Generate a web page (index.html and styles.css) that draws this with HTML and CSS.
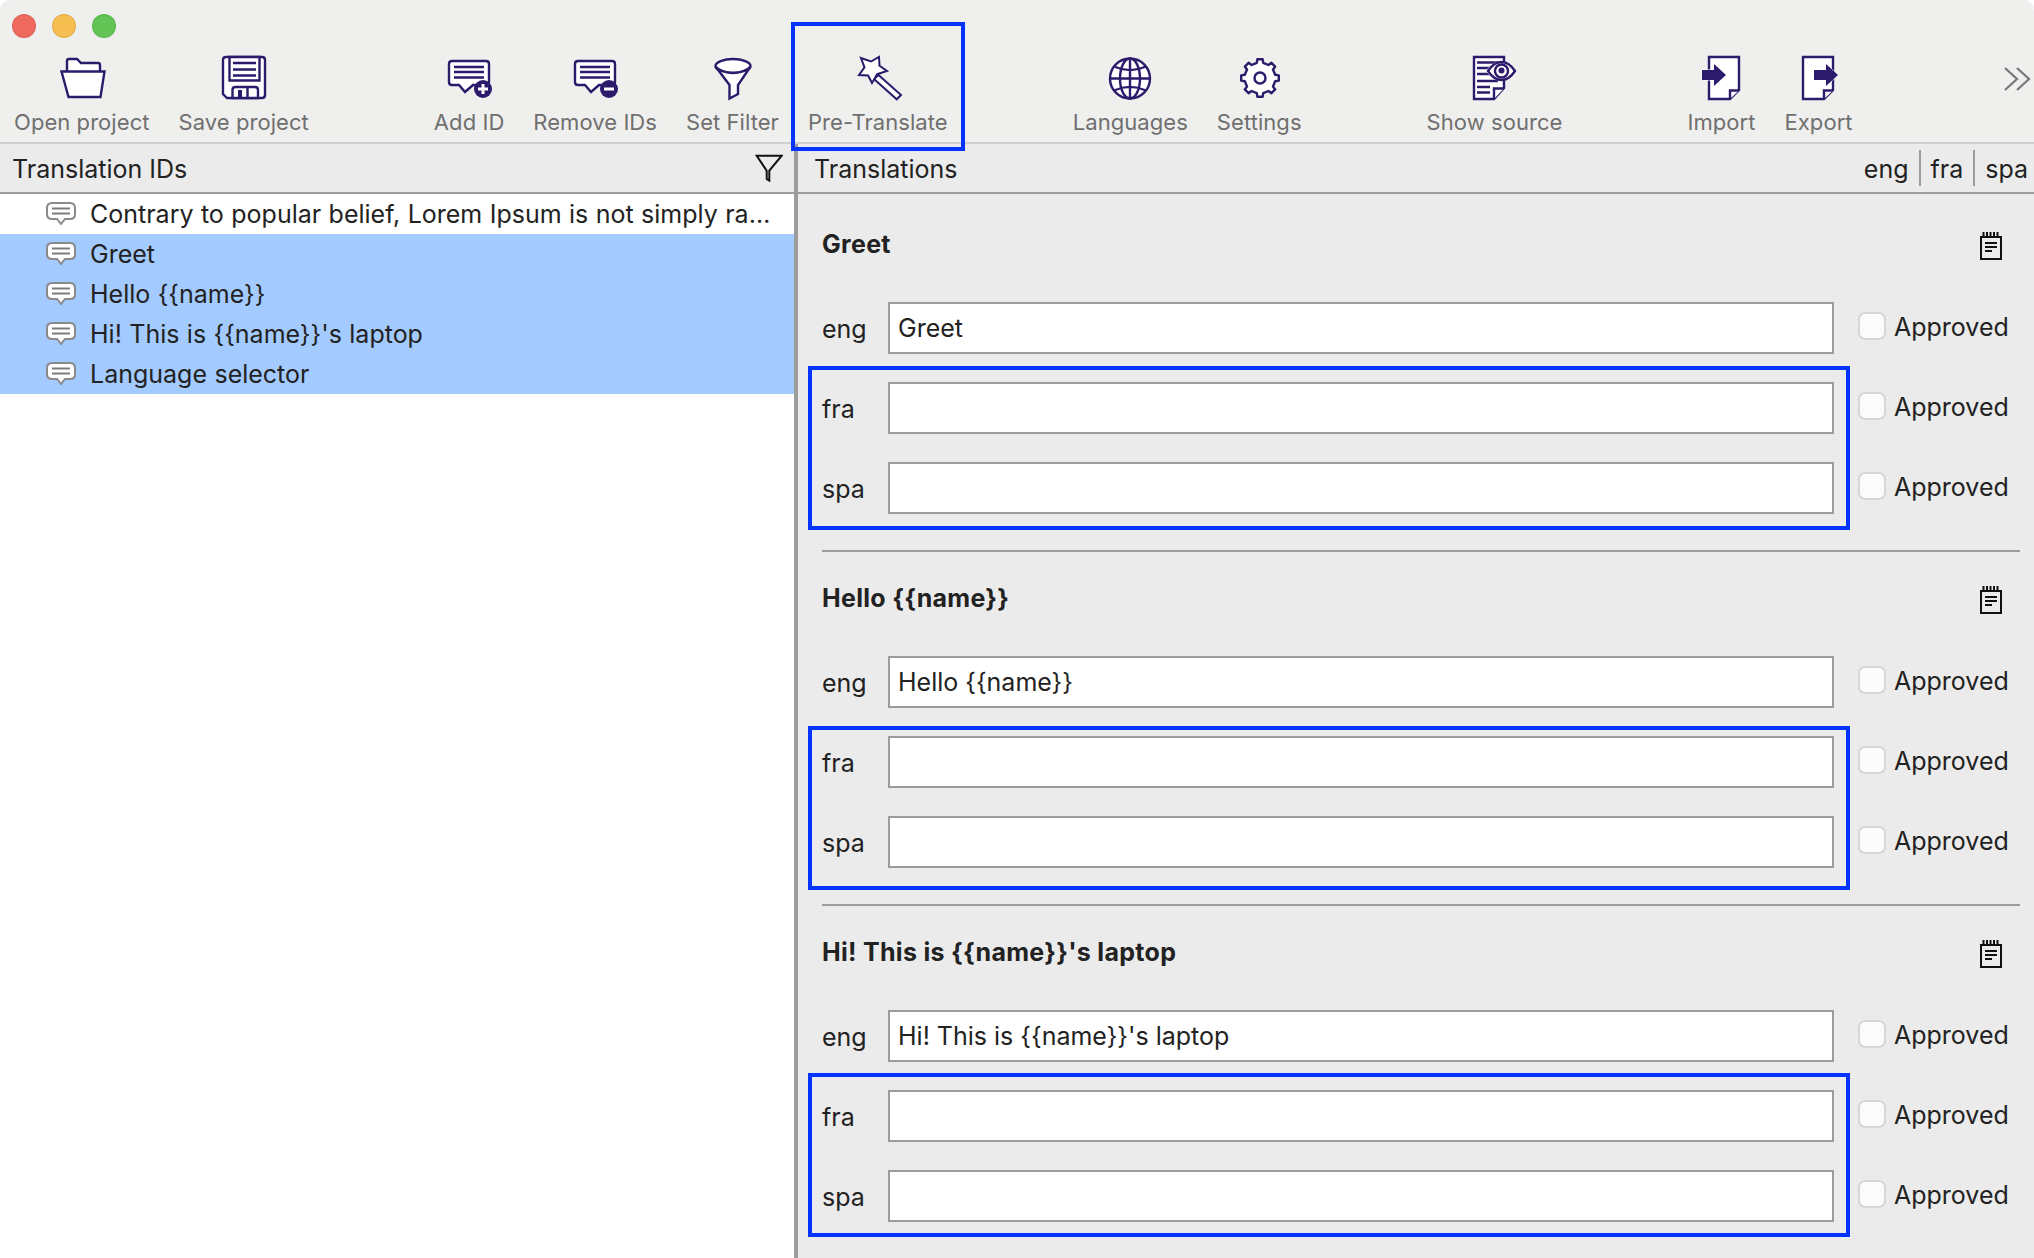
FILE: index.html
```html
<!DOCTYPE html>
<html lang="en">
<head>
<meta charset="utf-8">
<title>Translation editor</title>
<link rel="stylesheet" href="styles.css">
</head>
<body>
<div class="app">
  <header class="topbar">
    <div class="lights"><span class="light red"></span><span class="light yellow"></span><span class="light green"></span></div>
    <div class="tools">
      <div class="tool-group">
        <div class="tool">
          <svg class="tool-icon" viewBox="60 56 44 44"><g class="ink"><path d="M67 72V61q0-2 2-2h8l4 4h17q2 0 2 2v7"/><path d="M61.500 71.500H104.500L100.500 97H68.500Z"/></g></svg>
          <span>Open project</span>
        </div>
        <div class="tool">
          <svg class="tool-icon" viewBox="223 56 44 44"><g class="ink"><path d="M227 57H263q3 0 3 3V95q0 3-3 3H228l-4-4V60q0-3 3-3Z"/><path d="M230.500 57H260.500V80.500H230.500Z"/><path d="M233.500 98V90q0-3 3-3H256q3 0 3 3V98Z"/><path d="M234 63H257M234 69.500H257M234 75.500H257M248.500 87V98" fill="none"/></g><rect class="solid" x="239" y="90" width="4" height="7"/></svg>
          <span>Save project</span>
        </div>
      </div>
      <div class="tool-group">
        <div class="tool">
          <svg class="tool-icon" viewBox="447 56 44 44"><g class="ink"><path d="M452 61H486q3 0 3 3V82q0 3-3 3H473L465 92 459 85H452q-3 0-3-3V64q0-3 3-3Z"/><path d="M454 67H484M454 72H484M454 77.500H484" fill="none"/></g><circle class="solid" cx="483" cy="89" r="9"/><path class="glyph" d="M483 84V94M478 89H488"/></svg>
          <span>Add ID</span>
        </div>
        <div class="tool">
          <svg class="tool-icon" viewBox="572 56 44 44"><g class="ink"><path d="M577 61H611q3 0 3 3V82q0 3-3 3H598L590 92 584 85H577q-3 0-3-3V64q0-3 3-3Z"/><path d="M579 67H609M579 72H609M579 77.500H609" fill="none"/></g><circle class="solid" cx="608" cy="89" r="9"/><path class="glyph" d="M603 89H613"/></svg>
          <span>Remove IDs</span>
        </div>
        <div class="tool">
          <svg class="tool-icon" viewBox="710 56 44 44"><g class="ink"><ellipse cx="733" cy="66" rx="17.500" ry="7"/><path d="M715.500 66.500 729.500 85V98.500L738 94V85L750.500 66.500C747 71 739 73 733 73 727 73 719 71 715.500 66.500Z"/></g></svg>
          <span>Set Filter</span>
        </div>
        <div class="tool tool-callout">
          <svg class="tool-icon" viewBox="856 56 44 44"><g class="ink thin"><path d="M878.500 75 901 95 896.700 99.300 874 79Z"/><path d="M861 58 871 61.500 879 57 879.500 65.800 887 71 877.200 74.200 872 83 868.100 75.500 859 75 864.500 67.400Z"/></g></svg>
          <span>Pre-Translate</span>
          <div class="callout-box"></div>
        </div>
      </div>
      <div class="tool-group">
        <div class="tool">
          <svg class="tool-icon" viewBox="1108 56 44 44"><g class="ink"><circle cx="1130" cy="78.500" r="20"/><ellipse cx="1130" cy="78.500" rx="10" ry="20" fill="none"/><path d="M1110 78.500H1150M1130 58.500V98.500M1114 66.500C1124 71 1136 71 1146 66.500M1114 90.500C1124 86 1136 86 1146 90.500" fill="none"/></g></svg>
          <span>Languages</span>
        </div>
        <div class="tool">
          <svg class="tool-icon" viewBox="1237 56 44 44"><g class="ink" transform="translate(1260 78)"><path stroke-linejoin="round" d="M-3.220-15.160-2.640-18.810 2.640-18.810 3.220-15.160 8.440-13 11.430-15.170 15.170-11.430 13-8.440 15.160-3.220 18.810-2.640 18.810 2.640 15.160 3.220 13 8.440 15.170 11.430 11.430 15.170 8.440 13 3.220 15.160 2.640 18.810-2.640 18.810-3.220 15.160-8.440 13-11.430 15.170-15.170 11.430-13 8.440-15.160 3.220-18.810 2.640-18.810-2.640-15.160-3.220-13-8.440-15.170-11.430-11.430-15.170-8.440-13Z"/><circle r="5.500"/></g></svg>
          <span>Settings</span>
        </div>
      </div>
      <div class="tool-group">
        <div class="tool">
          <svg class="tool-icon" viewBox="1473 56 44 44"><g class="ink"><path d="M1474 57H1504V88L1494 99H1474Z"/><path d="M1494 99V88.500H1504" /><path d="M1477 62.500H1498M1477 68H1490M1477 74H1490M1477 81H1498M1477 87H1490M1477 92.500H1490" fill="none"/></g><path class="halo" d="M1486 71C1491 64 1496 61 1501.500 61 1507 61 1512 64 1517 71 1512 78 1507 81 1501.500 81 1496 81 1491 78 1486 71Z"/><g class="ink"><path d="M1488 71C1492 65 1496 62 1501.500 62 1507 62 1511 65 1515 71 1511 77 1507 80 1501.500 80 1496 80 1492 77 1488 71Z"/><circle cx="1501.500" cy="71" r="6.500"/></g><circle class="solid" cx="1501.500" cy="70.500" r="3"/></svg>
          <span>Show source</span>
        </div>
      </div>
      <div class="tool-group">
        <div class="tool">
          <svg class="tool-icon" viewBox="1698 56 44 44"><g class="ink"><path d="M1708 57H1738V90L1729 99H1708Z"/><path d="M1729 99V90.500H1738"/></g><path class="arrow" d="M1701 70H1713V64L1725 75 1713 86V80H1701Z"/></svg>
          <span>Import</span>
        </div>
        <div class="tool">
          <svg class="tool-icon" viewBox="1795 56 44 44"><g class="ink"><path d="M1801 57H1831V90L1822 99H1801Z"/><path d="M1822 99V90.500H1831"/></g><path class="arrow" d="M1812 70H1824V64L1836 75 1824 86V80H1812Z"/></svg>
          <span>Export</span>
        </div>
      </div>
      <svg class="overflow" viewBox="2005 56 24 44"><path d="M2005 68 2017 79 2005 90M2017 68 2029 79 2017 90"/></svg>
    </div>
  </header>

  <main class="panes">
    <section class="ids">
      <div class="pane-head">
        <span class="head-label">Translation IDs</span>
        <svg class="filter" viewBox="755 155 28 28"><path d="M756.700 156.700H781.700L769.300 171.700V181.700L766.700 180V171.700Z"/></svg>
      </div>
      <ul class="id-list">
        <li class="id-row"><svg class="bubble" viewBox="46 202 30 24"><path d="M52 203H70q5 0 5 5V214q0 5-5 5H65L61 224 57 219H52q-5 0-5-5V208q0-5 5-5Z"/><path class="bubble-lines" d="M52 208.500H70M52 213.500H70"/></svg><span class="id-text">Contrary to popular belief, Lorem Ipsum is not simply random text of classical literature</span></li>
        <li class="id-row selected"><svg class="bubble" viewBox="46 202 30 24"><path d="M52 203H70q5 0 5 5V214q0 5-5 5H65L61 224 57 219H52q-5 0-5-5V208q0-5 5-5Z"/><path class="bubble-lines" d="M52 208.500H70M52 213.500H70"/></svg><span class="id-text">Greet</span></li>
        <li class="id-row selected"><svg class="bubble" viewBox="46 202 30 24"><path d="M52 203H70q5 0 5 5V214q0 5-5 5H65L61 224 57 219H52q-5 0-5-5V208q0-5 5-5Z"/><path class="bubble-lines" d="M52 208.500H70M52 213.500H70"/></svg><span class="id-text">Hello {{name}}</span></li>
        <li class="id-row selected"><svg class="bubble" viewBox="46 202 30 24"><path d="M52 203H70q5 0 5 5V214q0 5-5 5H65L61 224 57 219H52q-5 0-5-5V208q0-5 5-5Z"/><path class="bubble-lines" d="M52 208.500H70M52 213.500H70"/></svg><span class="id-text">Hi! This is {{name}}'s laptop</span></li>
        <li class="id-row selected"><svg class="bubble" viewBox="46 202 30 24"><path d="M52 203H70q5 0 5 5V214q0 5-5 5H65L61 224 57 219H52q-5 0-5-5V208q0-5 5-5Z"/><path class="bubble-lines" d="M52 208.500H70M52 213.500H70"/></svg><span class="id-text">Language selector</span></li>
      </ul>
    </section>

    <section class="translations">
      <div class="pane-head head-right">
        <span class="head-label">Translations</span>
        <div class="lang-tabs"><span class="lang-tab">eng</span><span class="lang-tab">fra</span><span class="lang-tab">spa</span></div>
      </div>
      <div class="groups">
        <article class="group">
          <div class="group-title"><h2>Greet</h2><svg class="note" viewBox="0 0 22 28"><path d="M1 5H21V27H1Z"/><path d="M3.500 0V5M7 0V5M10.500 0V5M14 0V5M17.500 0V5M5 11H17M5 15H17M5 19H12"/></svg></div>
          <div class="rows">
            <div class="row"><label class="lang">eng</label><input class="field" value="Greet"><label class="approve"><input class="check" type="checkbox">Approved</label></div>
            <div class="row"><label class="lang">fra</label><input class="field"><label class="approve"><input class="check" type="checkbox">Approved</label></div>
            <div class="row"><label class="lang">spa</label><input class="field"><label class="approve"><input class="check" type="checkbox">Approved</label></div>
          </div>
          <div class="callout callout-a"></div>
        </article>
        <article class="group">
          <div class="group-title"><h2>Hello {{name}}</h2><svg class="note" viewBox="0 0 22 28"><path d="M1 5H21V27H1Z"/><path d="M3.500 0V5M7 0V5M10.500 0V5M14 0V5M17.500 0V5M5 11H17M5 15H17M5 19H12"/></svg></div>
          <div class="rows">
            <div class="row"><label class="lang">eng</label><input class="field" value="Hello {{name}}"><label class="approve"><input class="check" type="checkbox">Approved</label></div>
            <div class="row"><label class="lang">fra</label><input class="field"><label class="approve"><input class="check" type="checkbox">Approved</label></div>
            <div class="row"><label class="lang">spa</label><input class="field"><label class="approve"><input class="check" type="checkbox">Approved</label></div>
          </div>
          <div class="callout callout-b"></div>
        </article>
        <article class="group">
          <div class="group-title"><h2>Hi! This is {{name}}'s laptop</h2><svg class="note" viewBox="0 0 22 28"><path d="M1 5H21V27H1Z"/><path d="M3.500 0V5M7 0V5M10.500 0V5M14 0V5M17.500 0V5M5 11H17M5 15H17M5 19H12"/></svg></div>
          <div class="rows">
            <div class="row"><label class="lang">eng</label><input class="field" value="Hi! This is {{name}}'s laptop"><label class="approve"><input class="check" type="checkbox">Approved</label></div>
            <div class="row"><label class="lang">fra</label><input class="field"><label class="approve"><input class="check" type="checkbox">Approved</label></div>
            <div class="row"><label class="lang">spa</label><input class="field"><label class="approve"><input class="check" type="checkbox">Approved</label></div>
          </div>
          <div class="callout callout-c"></div>
        </article>
      </div>
    </section>
  </main>
</div>
</body>
</html>
```
FILE: styles.css
```css
* { box-sizing: border-box; }
html, body { margin: 0; height: 100%; background: #fff; }
body { font-family: Inter, "Liberation Sans", sans-serif; color: #222; overflow: hidden; }

.app { width: 2034px; height: 1258px; display: flex; flex-direction: column; overflow: hidden; border-radius: 10px 10px 0 0; }

.topbar { height: 144px; flex: none; background: #efefee; border-bottom: 2px solid #cfcfcf; }
.lights { height: 56px; padding: 14px 12px; display: flex; gap: 16px; }
.light { width: 24px; height: 24px; border-radius: 50%; border: 1px solid rgba(0,0,0,.08); }
.red { background: #ee6a5f; }
.yellow { background: #f5bd4f; }
.green { background: #61c454; }

.tools { display: flex; gap: 125px; padding: 0 5px 0 14px; }
.tool-group { display: flex; gap: 29px; }
.tool { display: flex; flex-direction: column; align-items: center; position: relative; }
.tool span { margin-top: 7px; font-size: 22px; line-height: 30px; letter-spacing: .06px; color: #6f6f6f; white-space: nowrap; }
.tool-icon { width: 44px; height: 44px; overflow: visible; display: block; }
.ink { fill: #fff; stroke: #2c1a6b; stroke-width: 2.4; }
.thin { stroke-width: 2; }
.solid { fill: #2c1a6b; }
.glyph { fill: none; stroke: #fff; stroke-width: 3; }
.halo { fill: #fff; }
.arrow { fill: #2c1a6b; stroke: #fff; stroke-width: 1; paint-order: stroke; }
.overflow { width: 24px; height: 44px; margin-left: auto; overflow: visible; flex: none; }
.overflow path { fill: none; stroke: #777; stroke-width: 2.2; }
.callout-box { position: absolute; left: -17px; right: -17px; top: -34px; height: 129px; border: 4px solid #0433ff; }

.panes { flex: 1; min-height: 0; display: grid; grid-template-columns: 794px 1fr; }
.ids { background: #fff; display: flex; flex-direction: column; min-width: 0; }
.translations { background: #ebebeb; border-left: 4px solid #9c9c9c; display: flex; flex-direction: column; min-width: 0; }

.pane-head { height: 50px; flex: none; background: #ebebeb; border-bottom: 2px solid #9c9c9c; display: flex; align-items: center; justify-content: space-between; padding: 0 12px; font-size: 25px; }
.head-right { padding: 0 6px 0 16px; }
.head-label { padding-top: 2px; }
.filter { width: 28px; height: 28px; margin-right: -1px; }
.filter path { fill: none; stroke: #111; stroke-width: 2; }
.lang-tabs { display: flex; align-items: center; height: 36px; }
.lang-tab { padding: 2px 10px 0; height: 36px; line-height: 34px; border-left: 2px solid #9c9c9c; }
.lang-tab:first-child { border-left: 0; }
.lang-tab:last-child { padding-right: 0; }

.id-list { list-style: none; margin: 0; padding: 0; }
.id-row { height: 40px; display: flex; align-items: center; gap: 14px; padding: 0 20px 0 46px; font-size: 25px; }
.selected { background: #a3cbff; }
.bubble { width: 30px; height: 24px; flex: none; }
.bubble path { fill: #fff; stroke: #8a8a8a; stroke-width: 2; }
.bubble .bubble-lines { fill: none; stroke: #7d7d7d; }
.id-text { white-space: nowrap; overflow: hidden; text-overflow: ellipsis; min-width: 0; word-spacing: .4px; }

.groups { padding: 4px 14px 0 24px; }
.group { position: relative; padding-top: 34px; padding-bottom: 36px; border-bottom: 2px solid #9c9c9c; }
.group-title { height: 28px; display: flex; justify-content: space-between; align-items: center; padding-right: 18px; }
.group-title h2 { margin: 0; font-size: 25px; font-weight: 700; letter-spacing: .3px; line-height: 28px; position: relative; top: -2px; }
.note { width: 22px; height: 28px; flex: none; }
.note path { fill: none; stroke: #111; stroke-width: 2; }
.rows { margin-top: 42px; display: flex; flex-direction: column; gap: 28px; }
.row { display: grid; grid-template-columns: 66px 1fr 186px; align-items: center; height: 52px; }
.lang { font-size: 25px; padding-top: 2px; }
.field { width: 100%; height: 52px; border: 2px solid #9c9c9c; border-radius: 0; background: #fff; padding: 0 8px; font: 25px Inter, "Liberation Sans", sans-serif; color: #222; outline: none; }
.approve { display: flex; align-items: center; gap: 8px; padding-left: 24px; font-size: 25px; position: relative; top: -1px; }
.check { appearance: none; width: 28px; height: 28px; margin: 0; background: #fbfbfb; border: 2px solid #d6d6d6; border-radius: 7px; flex: none; position: relative; top: -1px; }

.callout { position: absolute; left: -14px; width: 1042px; height: 164px; border: 4px solid #0433ff; pointer-events: none; }
.callout-a { top: 168px; }
.callout-b { top: 174px; }
.callout-c { top: 167px; }
```
